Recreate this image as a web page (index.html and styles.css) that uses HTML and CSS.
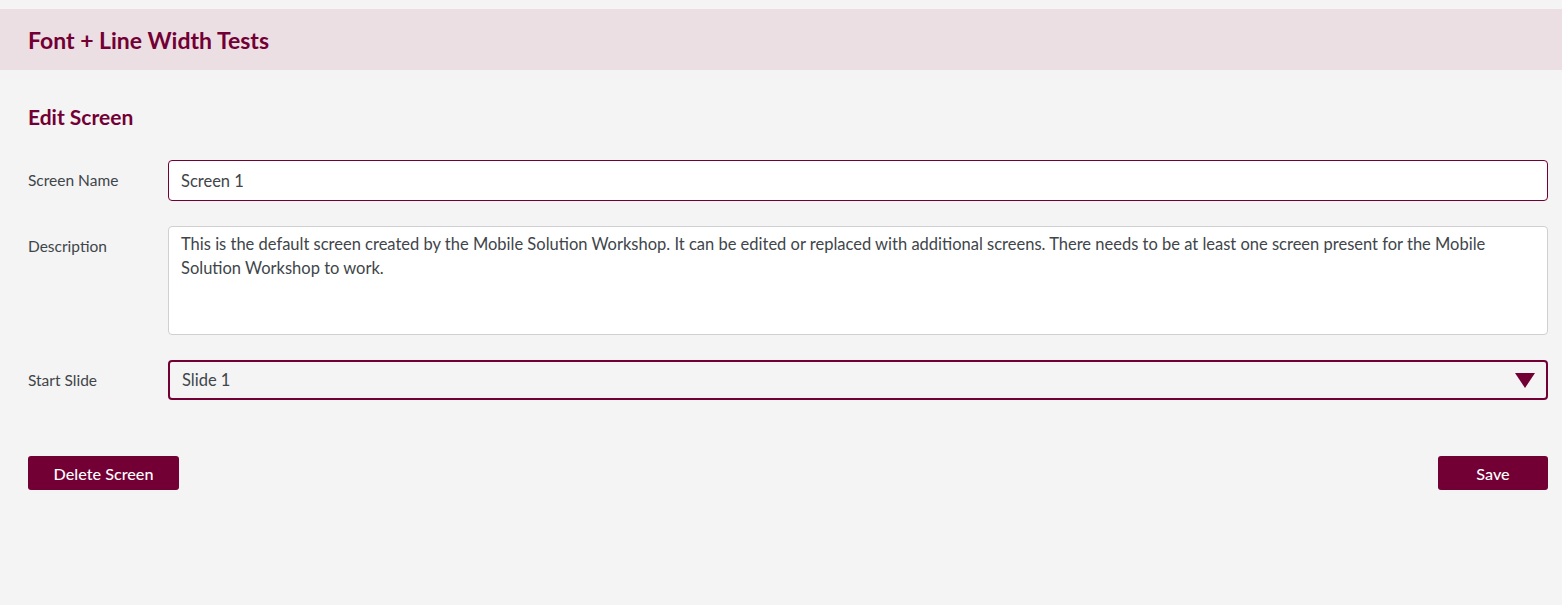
FILE: index.html
```html
<!DOCTYPE html>
<html lang="en">
<head>
<meta charset="utf-8">
<title>Edit Screen</title>
<link rel="stylesheet" href="styles.css">
</head>
<body>
<div class="page">
  <header class="topbar">
    <h1 class="topbar-title">Font + Line Width Tests</h1>
  </header>
  <main class="content">
    <h2 class="section-title">Edit Screen</h2>
    <form class="form">
      <div class="row">
        <label class="label" for="name">Screen Name</label>
        <input class="field field-text" id="name" type="text" value="Screen 1">
      </div>
      <div class="row">
        <label class="label" for="desc">Description</label>
        <textarea class="field field-area" id="desc">This is the default screen created by the Mobile Solution Workshop. It can be edited or replaced with additional screens. There needs to be at least one screen present for the Mobile Solution Workshop to work.</textarea>
      </div>
      <div class="row">
        <label class="label" for="slide">Start Slide</label>
        <div class="select-wrap">
          <select class="field field-select" id="slide">
            <option>Slide 1</option>
          </select>
          <svg class="select-arrow" width="20" height="15" viewBox="0 0 20 15"><path d="M0 0 H20 L10 15 Z" fill="#730034"/></svg>
        </div>
      </div>
      <div class="actions">
        <button type="button" class="btn btn-delete">Delete Screen</button>
        <button type="button" class="btn btn-save">Save</button>
      </div>
    </form>
  </main>
</div>
</body>
</html>
```

FILE: styles.css
```css
* { box-sizing: border-box; }
html, body {
  margin: 0;
  background: #f4f4f4;
  font-family: Lato, "Noto Sans", "Liberation Sans", sans-serif;
  color: #40454a;
}
.page {
  padding-top: 9px;
  min-height: 605px;
}
.topbar {
  height: 61px;
  background: #ebdfe3;
  display: flex;
  align-items: center;
  padding-left: 28px;
}
.topbar-title {
  margin: 0;
  font-size: 23px;
  font-weight: 700;
  color: #730034;
}
.content {
  padding: 34px 14px 0 28px;
}
.section-title {
  margin: 0;
  font-size: 21px;
  font-weight: 700;
  color: #730034;
  line-height: 26px;
}
.form {
  margin-top: 30px;
  display: flex;
  flex-direction: column;
  gap: 25px;
}
.row {
  display: flex;
  align-items: flex-start;
}
.label {
  width: 140px;
  flex: none;
  font-size: 15.5px;
  line-height: 40px;
  color: #40454a;
}
.field {
  flex: 1;
  font-family: inherit;
  font-size: 16.5px;
  color: #40454a;
  margin: 0;
  outline: none;
}
.field-text {
  height: 41px;
  border: 1px solid #730034;
  border-radius: 4px;
  background: #fff;
  padding: 0 12px;
}
.field-area {
  height: 109px;
  border: 1px solid #d0d0d3;
  border-radius: 4px;
  background: #fff;
  padding: 5px 12px;
  line-height: 24px;
  resize: none;
  overflow: hidden;
}
.select-wrap {
  flex: 1;
  position: relative;
  display: flex;
}
.field-select {
  -webkit-appearance: none;
  appearance: none;
  height: 40px;
  border: 2px solid #730034;
  border-radius: 4px;
  background: #f4f4f4;
  padding: 0 12px;
}
.select-arrow {
  position: absolute;
  right: 13px;
  top: 13px;
  pointer-events: none;
}
.actions {
  margin-top: 31px;
  display: flex;
  justify-content: space-between;
}
.btn {
  height: 34px;
  border: none;
  border-radius: 3px;
  background: #730034;
  color: #fff;
  font-family: inherit;
  font-size: 16.2px;
  font-weight: 500;
  padding: 0;
}
.btn-delete { width: 151px; }
.btn-save { width: 110px; }
```
